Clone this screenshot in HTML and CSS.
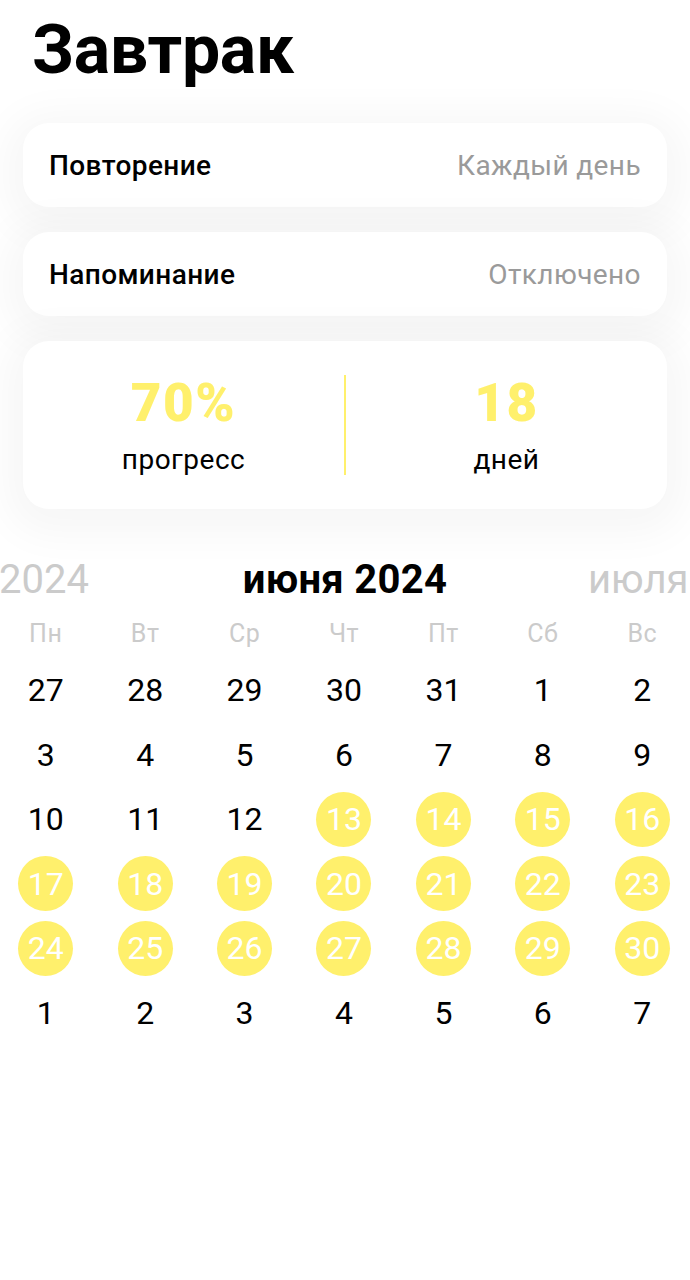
FILE: index.html
```html
<!DOCTYPE html>
<html lang="ru">
<head>
  <meta charset="UTF-8">
  <title>Завтрак</title>
  <meta name="viewport" content="width=device-width,initial-scale=1">
  <link rel="stylesheet" href="styles.css">
</head>
<body>
  <h1 class="titulo">Завтрак</h1>

  <div class="ajustes">
    <div class="fila">
      <span class="fila-nombre">Повторение</span>
      <span class="fila-valor">Каждый день</span>
    </div>
    <div class="fila">
      <span class="fila-nombre">Напоминание</span>
      <span class="fila-valor">Отключено</span>
    </div>
    <div class="stats">
      <div class="stat">
        <div class="stat-num">70%</div>
        <div class="stat-txt">прогресс</div>
      </div>
      <div class="stat-sep"></div>
      <div class="stat">
        <div class="stat-num">18</div>
        <div class="stat-txt">дней</div>
      </div>
    </div>
  </div>

  <div class="calendario">
    <div class="meses">
      <span class="mes mes-prev">2024</span>
      <span class="mes mes-act">июня 2024</span>
      <span class="mes mes-next">июля</span>
    </div>
    <div class="semana">
      <span>Пн</span><span>Вт</span><span>Ср</span><span>Чт</span><span>Пт</span><span>Сб</span><span>Вс</span>
    </div>
    <div class="dias" id="dias"></div>
  </div>

  <script>
    // 27 мая .. 7 июля, отмечены 13-30 июня
    const dias = document.getElementById('dias');
    const lista = [27, 28, 29, 30, 31];
    for (let d = 1; d <= 30; d++) lista.push(d);
    for (let d = 1; d <= 7; d++) lista.push(d);
    dias.innerHTML = lista.map((d, i) => {
      const hecho = i >= 5 && i < 35 && d >= 13;
      return `<div class="dia"><span class="${hecho ? 'hecho' : ''}">${d}</span></div>`;
    }).join('');
  </script>
</body>
</html>
```

FILE: styles.css
```css
:root {
  --amarillo: #fff06c;
  --gris-texto: #9a9a9a;
  --gris-claro: #cbcbcb;
}
html, body {
  margin: 0;
  padding: 0;
  background: #fff;
  color: #000;
  font-family: Roboto, 'Liberation Sans', Arial, sans-serif;
}
body {
  width: 690px;
  overflow: hidden;
}
.titulo {
  margin: 0;
  padding: 4px 0 0 32px;
  font-size: 68px;
  font-weight: 700;
  line-height: 92px;
  letter-spacing: -0.3px;
}
.ajustes {
  margin-top: 27px;
  padding: 0 23px;
  display: flex;
  flex-direction: column;
  gap: 25px;
}
.fila, .stats {
  background: #fff;
  border-radius: 26px;
  box-shadow: 0 8px 40px 18px rgba(0, 0, 0, 0.035);
}
.fila {
  height: 84px;
  padding: 0 26px;
  display: flex;
  align-items: center;
  justify-content: space-between;
  font-size: 28px;
  letter-spacing: 0.4px;
}
.fila-nombre {
  font-weight: 500;
}
.fila-valor {
  color: var(--gris-texto);
}
.stats {
  height: 168px;
  display: flex;
  align-items: center;
}
.stat {
  flex: 1;
  display: flex;
  flex-direction: column;
  align-items: center;
  gap: 9px;
}
.stat-num {
  color: var(--amarillo);
  font-size: 53px;
  font-weight: 900;
  line-height: 60px;
  letter-spacing: 1.5px;
}
.stat-txt {
  font-size: 28px;
  line-height: 36px;
  letter-spacing: 0.5px;
}
.stat-sep {
  width: 2px;
  height: 100px;
  background: var(--amarillo);
}
.calendario {
  margin-top: 46px;
}
/* листалка месяцев: соседние месяцы уходят за край */
.meses {
  display: flex;
  justify-content: space-between;
  align-items: center;
  height: 48px;
  font-size: 40px;
  font-weight: 500;
}
.mes-prev, .mes-next {
  color: var(--gris-claro);
  font-weight: 400;
  white-space: nowrap;
}
.mes-prev {
  width: 88px;
  margin-left: -1px;
  text-align: right;
}
.mes-next {
  width: 102px;
  margin-left: -15px;
}
.mes-act {
  font-weight: 700;
  letter-spacing: 0.3px;
}
.semana, .dias {
  display: grid;
  grid-template-columns: repeat(7, 1fr);
  margin: 0 -2px 0 -4px;
}
.semana {
  margin-top: 10px;
  height: 40px;
  align-items: center;
  color: var(--gris-claro);
  font-size: 25px;
  letter-spacing: 0.5px;
  text-align: center;
}
.dias {
  margin-top: 5px;
  grid-auto-rows: 64.5px;
}
.dia {
  display: flex;
  align-items: center;
  justify-content: center;
  font-size: 32px;
}
.dia span {
  width: 55px;
  height: 55px;
  border-radius: 50%;
  display: flex;
  align-items: center;
  justify-content: center;
}
.dia .hecho {
  background: var(--amarillo);
  color: #fff;
}
```
